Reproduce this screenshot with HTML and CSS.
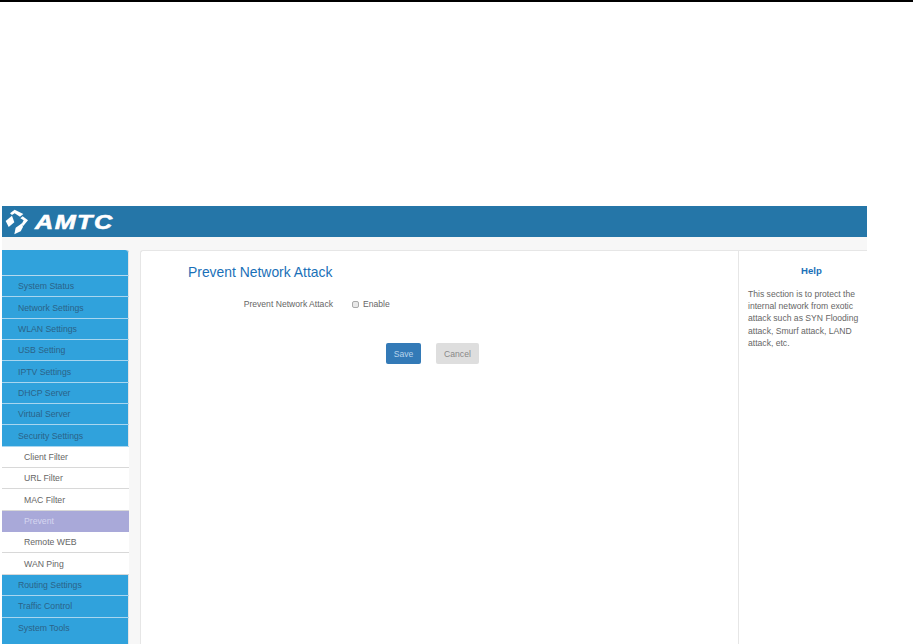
FILE: index.html
```html
<!DOCTYPE html>
<html lang="en">
<head>
<meta charset="utf-8">
<title>Prevent Network Attack</title>
<link rel="stylesheet" href="styles.css">
</head>
<body>
<div class="rule"></div>
<div class="app">
  <header class="banner">
    <svg class="logo-mark" viewBox="0 0 99 90" aria-hidden="true">
      <path d="M11 42 L30 26 L37 46 L20 60 Z" fill="#fff"/>
      <path d="M24 19 L38 8 L64 21 L54 29 L38 19 L30 24 Z" fill="#fff"/>
      <path d="M62 28 L78 40 L63 58 L59 51 L65 40 L55 34 Z" fill="#fff"/>
      <path d="M37 82 L41 62 L60 49 L63 60 L56 73 Z" fill="#fff"/>
    </svg>
    <span class="logo-text">AMTC</span>
  </header>
  <div class="main">
    <nav class="side">
      <div class="side-top"></div>
      <a class="item">System Status</a>
      <a class="item">Network Settings</a>
      <a class="item">WLAN Settings</a>
      <a class="item">USB Setting</a>
      <a class="item">IPTV Settings</a>
      <a class="item">DHCP Server</a>
      <a class="item">Virtual Server</a>
      <a class="item">Security Settings</a>
      <a class="item sub">Client Filter</a>
      <a class="item sub">URL Filter</a>
      <a class="item sub">MAC Filter</a>
      <a class="item sub active">Prevent</a>
      <a class="item sub">Remote WEB</a>
      <a class="item sub">WAN Ping</a>
      <a class="item">Routing Settings</a>
      <a class="item">Traffic Control</a>
      <a class="item last">System Tools</a>
    </nav>
    <section class="panel">
      <div class="content">
        <h1 class="title">Prevent Network Attack</h1>
        <div class="field">
          <span class="label">Prevent Network Attack</span>
          <label class="check"><span class="box"></span>Enable</label>
        </div>
        <div class="actions">
          <button class="btn save" type="button">Save</button>
          <button class="btn cancel" type="button">Cancel</button>
        </div>
      </div>
      <aside class="help">
        <h2 class="help-title">Help</h2>
        <p class="help-text">This section is to protect the internal network from exotic attack such as SYN Flooding attack, Smurf attack, LAND attack, etc.</p>
      </aside>
    </section>
  </div>
</div>
</body>
</html>
```
FILE: styles.css
```css
* { box-sizing: border-box; }
html, body { margin: 0; padding: 0; height: 100%; overflow: hidden; background: #fff; }
body { font-family: "Liberation Sans", Arial, sans-serif; font-size: 9px; color: #555; }
.rule { height: 1.5px; background: #000; }
.app { margin: 204.5px 46px 0 2px; width: 865px; height: 438px; display: flex; flex-direction: column; }
.banner { height: 31px; background: #2576a8; display: flex; align-items: center; flex: none; }
.logo-mark { width: 33px; height: 30px; display: block; flex: none; }
.logo-text { color: #fff; font-size: 21px; font-weight: bold; font-style: italic; letter-spacing: 1.2px; line-height: 1; -webkit-text-stroke: 0.6px #fff; transform: scaleX(1.2); transform-origin: left center; }
.main { flex: 1; background: #f7f7f7; padding-top: 13px; display: flex; gap: 11px; min-height: 0; }
.side { width: 127px; background: #30a2dc; border-top-right-radius: 3px; box-shadow: inset -1px 0 0 #e4e4e4; flex: none; }
.side-top { height: 26px; border-bottom: 1px solid #b5d9ee; }
.item { display: flex; align-items: center; height: 21.35px; padding-left: 16px; color: #2b6288; border-bottom: 1px solid #a9d6ef; font-size: 8.7px; }
.sub { background: #fff; color: #666; padding-left: 22px; border-bottom-color: #d8d8d8; }
.active { background: #a9a9d9; color: #d6d6f0; border-bottom-color: #a9a9d9; }
.last { border-bottom: 0; }
.panel { flex: 1; background: #fff; border: 1px solid #e6e6e6; border-width: 1px 0 0 1px; border-top-left-radius: 3px; display: flex; min-width: 0; }
.content { width: 598px; border-right: 1px solid #e6e6e6; padding: 13px 0 0 47px; flex: none; }
.title { margin: 0; font-size: 13.9px; font-weight: normal; color: #1a70b8; line-height: 16px; }
.field { display: flex; align-items: center; margin-top: 18px; line-height: 12px; }
.label { width: 145px; text-align: right; color: #666; font-size: 8.6px; }
.check { display: flex; align-items: center; margin-left: 19px; color: #666; font-size: 8.6px; }
.box { width: 7px; height: 7px; background: #e9e9e9; border: 1px solid #aaa; border-radius: 2px; margin-right: 4px; }
.actions { display: flex; gap: 15px; margin-top: 33px; margin-left: 198px; }
.btn { height: 21px; border-radius: 2px; font: 8.6px "Liberation Sans", Arial, sans-serif; padding: 0; border: 0; }
.save { width: 35px; background: #337ab7; color: #b8d4ec; }
.cancel { width: 43px; background: #dedede; color: #888; }
.help { flex: 1; padding: 13px 4px 0 9px; }
.help-title { margin: 0; padding-left: 12px; font-size: 9.6px; font-weight: bold; text-align: center; color: #1a70b8; line-height: 14px; }
.help-text { margin: 10px 0 0; line-height: 12.2px; color: #666; font-size: 8.6px; }
```
